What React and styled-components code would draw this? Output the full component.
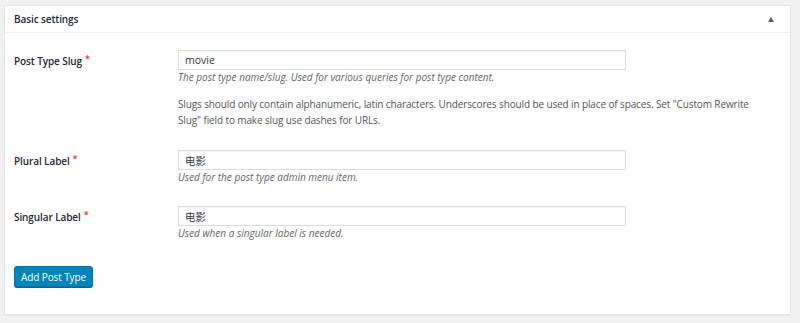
import React from 'react'
import styled, { createGlobalStyle } from 'styled-components'

const GlobalStyle = createGlobalStyle`
  html, body {
    margin: 0;
    padding: 0;
    background: #f1f1f1;
  }
  body {
    font-family: "Open Sans", "Noto Sans", "Noto Sans CJK SC", sans-serif;
    color: #23282d;
  }
`

const Page = styled.div`
  width: 800px;
  height: 323px;
  padding: 5px 9px 0 4px;
  box-sizing: border-box;
`

const Panel = styled.section`
  background: #fff;
  border: 1px solid #e5e5e5;
  box-shadow: 0 1px 1px rgba(0, 0, 0, 0.04);
`

const Header = styled.div`
  display: flex;
  align-items: center;
  justify-content: space-between;
  height: 26px;
  padding: 0 16px 0 9px;
  border-bottom: 1px solid #eee;
`

const Title = styled.h2`
  margin: 0;
  font-size: 10px;
  font-weight: 600;
  letter-spacing: -0.1px;
  color: #23282d;
`

const Toggle = styled.span`
  width: 0;
  height: 0;
  border-left: 3px solid transparent;
  border-right: 3px solid transparent;
  border-bottom: 5px solid #555d66;
`

const Body = styled.div`
  padding: 6px 9px 27px 9px;
`

const Row = styled.div`
  display: grid;
  grid-template-columns: 164px 448px;
  padding: 11px 0;
`

const Label = styled.label`
  padding-top: 3px;
  font-size: 10px;
  font-weight: 600;
  letter-spacing: -0.1px;
  line-height: 16px;
`

const Required = styled.span`
  color: #dc3232;
  margin-left: 3px;
  font-size: 9px;
  vertical-align: top;
  line-height: 12px;
`

const Field = styled.div`
  display: flex;
  flex-direction: column;
`

const Input = styled.input`
  box-sizing: border-box;
  width: 448px;
  height: 20px;
  padding: 0 6px;
  border: 1px solid #ddd;
  box-shadow: inset 0 1px 2px rgba(0, 0, 0, 0.04);
  font-family: "Open Sans", "Noto Sans CJK SC", sans-serif;
  font-size: 10.5px;
  color: #32373c;
  outline: none;
`

const Desc = styled.p`
  margin: 0;
  font-size: 10px;
  line-height: 14px;
  font-style: italic;
  color: #666;
`

const Note = styled.p`
  margin: 12px 0 0;
  width: 585px;
  font-size: 10px;
  letter-spacing: -0.12px;
  line-height: 16px;
  color: #555;
`

const Button = styled.button`
  margin-top: 15px;
  height: 21px;
  padding: 0 6px;
  background: #0085ba;
  border: 1px solid #0073aa;
  border-radius: 3px;
  box-shadow: 0 1px 0 #006799;
  color: #fff;
  font-family: "Open Sans", sans-serif;
  font-size: 10px;
  letter-spacing: -0.1px;
  cursor: pointer;
`

const fields = [
  {
    label: 'Post Type Slug',
    value: 'movie',
    desc: 'The post type name/slug. Used for various queries for post type content.',
    note: 'Slugs should only contain alphanumeric, latin characters. Underscores should be used in place of spaces. Set "Custom Rewrite Slug" field to make slug use dashes for URLs.',
  },
  { label: 'Plural Label', value: '电影', desc: 'Used for the post type admin menu item.' },
  { label: 'Singular Label', value: '电影', desc: 'Used when a singular label is needed.' },
]

export default function App() {
  return (
    <Page>
      <GlobalStyle />
      <Panel>
        <Header>
          <Title>Basic settings</Title>
          <Toggle />
        </Header>
        <Body>
          {fields.map((f) => (
            <Row key={f.label}>
              <Label>
                {f.label}
                <Required>*</Required>
              </Label>
              <Field>
                <Input defaultValue={f.value} />
                <Desc>{f.desc}</Desc>
                {f.note && <Note>{f.note}</Note>}
              </Field>
            </Row>
          ))}
          <Button>Add Post Type</Button>
        </Body>
      </Panel>
    </Page>
  )
}
